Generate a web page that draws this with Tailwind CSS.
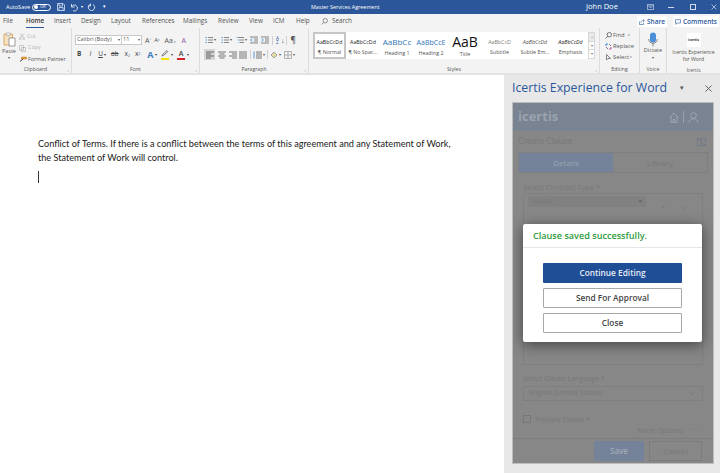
<!DOCTYPE html>
<html lang="en">
<head>
    <meta charset="UTF-8">
    <title>Master Services Agreement - Word</title>
    <script src="https://cdn.jsdelivr.net/npm/@tailwindcss/browser@4"></script>
</head>
<body class="w-[720px] h-[473px] overflow-hidden bg-white font-['Open_Sans',sans-serif] text-[#444]">

    <!-- Title bar -->
    <header class="h-[14px] bg-[#2b579a] text-white flex items-center relative">
        <div class="w-[311px] flex items-center text-[5.500px] shrink-0">
            <span class="ml-[6px] w-[20px] whitespace-nowrap">AutoSave</span>
            <span class="ml-[6px] w-[19px] h-[7px] rounded-full border border-white flex items-center pl-[1px] gap-[2px] text-[4px]"><i class="w-[4px] h-[4px] rounded-full bg-white"></i>Off</span>
            <svg class="ml-[6px] w-[8px] h-[8px]" viewBox="0 0 8 8" fill="none" stroke="#dce6f4" stroke-width=".8"><path d="M.5.5h5.500l1.500 1.500v5.500h-7zM2 .5v2.500h3.500v-2.500M2 7.500v-3h4v3"/></svg>
            <svg class="ml-[5px] w-[9px] h-[9px]" viewBox="0 0 9 9" fill="none" stroke="#dce6f4" stroke-width=".9"><path d="M1.500 1v3h3M1.700 3.800a3 3 0 1 1 1.500 4"/></svg>
            <span class="ml-[2px] text-[4px]">▾</span>
            <svg class="ml-[4px] w-[9px] h-[9px]" viewBox="0 0 9 9" fill="none" stroke="#dce6f4" stroke-width=".9"><path d="M3 1.500a3.200 3.200 0 1 0 3 0M3.500 .5v2.500h-2.500"/></svg>
            <span class="ml-[7px] text-[5px]">▾</span>
        </div>
        <span class="w-[68px] text-center whitespace-nowrap text-[5.400px] shrink-0">Master Services Agreement</span>
        <span class="ml-[207px] w-[31px] text-[7.500px] whitespace-nowrap shrink-0">John Doe</span>
        <svg class="ml-[30px] w-[7px] h-[6px] shrink-0" viewBox="0 0 7 6" fill="none" stroke="#cfdcee" stroke-width=".7"><path d="M.4.4h6.200v5.200h-6.200zM.4 2h6.200M2.500 4l1-1 1 1"/></svg>
        <span class="ml-[14px] w-[6px] h-[1px] bg-[#cfdcee] shrink-0"></span>
        <span class="ml-[16px] w-[6px] h-[6px] border border-[#cfdcee] shrink-0"></span>
        <svg class="ml-[15px] w-[6px] h-[6px] shrink-0" viewBox="0 0 6 6" stroke="#cfdcee" stroke-width=".7"><path d="M.5.5l5 5M5.500.5l-5 5"/></svg>
    </header>

    <!-- Tabs -->
    <nav class="h-[14px] bg-[#f3f3f3] flex items-center text-[6.300px] text-[#555] relative whitespace-nowrap">
        <span class="ml-[3px] w-[23px]">File</span>
        <span class="w-[18px] mr-[10px] font-semibold text-[#333] border-b-[1.500px] border-[#2b579a] leading-[11px] h-[13px]">Home</span>
        <span class="w-[27px]">Insert</span>
        <span class="w-[30px]">Design</span>
        <span class="w-[31px]">Layout</span>
        <span class="w-[41px]">References</span>
        <span class="w-[35px]">Mailings</span>
        <span class="w-[31px]">Review</span>
        <span class="w-[24px]">View</span>
        <span class="w-[23px]">ICM</span>
        <span class="w-[25px]">Help</span>
        <svg class="w-[7px] h-[7px]" viewBox="0 0 7 7" fill="none" stroke="#666" stroke-width=".7"><circle cx="4.300" cy="2.700" r="2.200"/><path d="M2.700 4.300L.5 6.500"/></svg>
        <span class="ml-[4px]">Search</span>
        <span class="absolute left-[637px] top-[2px] w-[30px] h-[11px] bg-white text-[#2b579a] font-semibold flex items-center justify-center gap-[2px] text-[6.500px]">
            <svg class="w-[6px] h-[6px]" viewBox="0 0 6 6" fill="none" stroke="#2b579a" stroke-width=".6"><path d="M.5 2.500v3h4v-2M2 3.500c0-1.500 1-2 2.500-2M4 .5l1.500 1-1.500 1"/></svg>Share</span>
        <span class="absolute left-[673px] top-[2px] w-[46px] h-[11px] bg-white text-[#2b579a] font-semibold flex items-center justify-center gap-[2px] text-[6.500px]">
            <svg class="w-[6px] h-[6px]" viewBox="0 0 6 6" fill="none" stroke="#2b579a" stroke-width=".6"><path d="M.5.700h5v3.300h-3.500l-1 1.300v-1.300h-.5z"/></svg>Comments</span>
    </nav>

    <!-- Ribbon -->
    <section class="h-[45px] bg-[#f3f3f3] flex text-[5.400px] text-[#555] leading-none">

        <div class="w-[72px] border-r border-[#dcdcdc] flex flex-col">
            <div class="flex-1 flex pl-[2px] pt-[4px]">
                <div class="w-[14px] flex flex-col items-center">
                    <svg class="w-[13px] h-[15px]" viewBox="0 0 13 15" fill="none"><path d="M1 2h8.500v11h-8.500z" fill="#f6e2c0" stroke="#d99a45" stroke-width=".8"/><path d="M3.500 1h3.500v2.500h-3.500z" fill="#fff" stroke="#999" stroke-width=".6"/><path d="M6 6h6v8h-6z" fill="#fff" stroke="#777" stroke-width=".7"/></svg>
                    <span class="mt-[2px]">Paste</span>
                    <span class="mt-[2px] text-[4px]">▾</span>
                </div>
                <div class="ml-[3px] flex flex-col gap-[4.500px] pt-[1px] whitespace-nowrap">
                    <span class="flex items-center gap-[2px] text-[#b5b5b5]"><svg class="w-[6px] h-[7px]" viewBox="0 0 6 7" fill="none" stroke="#aaa" stroke-width=".6"><path d="M1 .5l3.500 4M5 .5l-3.500 4"/><circle cx="1.200" cy="5.500" r="1"/><circle cx="4.800" cy="5.500" r="1"/></svg>Cut</span>
                    <span class="flex items-center gap-[2px] text-[#b5b5b5]"><svg class="w-[7px] h-[7px]" viewBox="0 0 7 7" fill="none" stroke="#aaa" stroke-width=".6"><path d="M.5.500h4v4.500h-4zM2.500 2.500h4v4h-4z"/></svg>Copy</span>
                    <span class="flex items-center gap-[1px]"><svg class="w-[8px] h-[7px]" viewBox="0 0 8 7" fill="none" stroke-width="1"><path d="M2.500 1h5v2h-5z" fill="#e59b3a" stroke="#c77a20" stroke-width=".5"/><path d="M1 5.500l3-2.500" stroke="#444"/></svg>Format Painter</span>
                </div>
            </div>
            <span class="text-center h-[6px] text-[5.200px] flex items-center justify-center relative">Clipboard<span class="absolute right-[2px] text-[4px] text-[#888]">⌟</span></span>
        </div>

        <div class="w-[128px] border-r border-[#dcdcdc] flex flex-col">
            <div class="flex-1 px-[3px] pt-[7px]">
                <div class="flex items-center h-[10px]">
                    <span class="w-[47px] h-[10px] bg-white border border-[#c8c8c8] flex items-center justify-between px-[1px] text-[5.600px]">Calibri (Body)<i class="not-italic text-[4px]">▾</i></span>
                    <span class="w-[20px] h-[10px] bg-white border border-l-0 border-[#c8c8c8] flex items-center justify-between px-[1px] text-[5.600px]">11<i class="not-italic text-[4px]">▾</i></span>
                    <span class="ml-[3px] text-[7px]">A<sup class="text-[3px] text-[#2b579a]">^</sup></span>
                    <span class="ml-[3px] text-[6px]">A<sup class="text-[3px] text-[#2b579a]">v</sup></span>
                    <span class="ml-[5px] text-[7px] whitespace-nowrap">Aa<i class="not-italic text-[3px]"> ▾</i></span>
                    <span class="ml-[6px] text-[7px] text-[#8a5aa8]">A</span>
                </div>
                <div class="flex items-center mt-[4px] h-[11px] text-[6.500px] text-[#444]">
                    <b class="ml-[2px]">B</b>
                    <i class="ml-[8px]">I</i>
                    <u class="ml-[7px]">U</u><span class="ml-[1px] text-[4px]">▾</span>
                    <s class="ml-[5px]">ab</s>
                    <span class="ml-[6px]">x<sub class="text-[3.500px] text-[#2b579a]">2</sub></span>
                    <span class="ml-[5px]">x<sup class="text-[3.500px] text-[#2b579a]">2</sup></span>
                    <span class="ml-[7px] text-[9px] font-bold text-[#3f7fc4]">A</span><span class="ml-[1px] text-[4px]">▾</span>
                    <span class="ml-[4px] w-[9px] h-[10px] flex flex-col items-center"><svg class="w-[8px] h-[7px]" viewBox="0 0 8 7" fill="none" stroke="#666" stroke-width=".8"><path d="M1 6l1-2 4-3.500 1 1-4 3.500z"/></svg><i class="w-[8px] h-[2px] bg-[#f4e300] mt-[1px]"></i></span><span class="ml-[1px] text-[4px]">▾</span>
                    <span class="ml-[4px] w-[9px] h-[10px] flex flex-col items-center font-semibold leading-[7px] text-[7px]">A<i class="w-[8px] h-[2px] bg-[#d8222a] mt-[1px]"></i></span><span class="ml-[1px] text-[4px]">▾</span>
                </div>
            </div>
            <span class="text-center h-[6px] text-[5.200px] flex items-center justify-center relative">Font<span class="absolute right-[2px] text-[4px] text-[#888]">⌟</span></span>
        </div>

        <div class="w-[109px] border-r border-[#dcdcdc] flex flex-col">
            <div class="flex-1 pl-[4px] pt-[7px]">
                <div class="flex items-center h-[10px] whitespace-nowrap">
                    <svg class="ml-[1px] w-[8px] h-[8px]" viewBox="0 0 8 8" stroke="#555" stroke-width=".7"><path d="M3 1.500h5M3 4h5M3 6.500h5"/><path d="M.5 1.500h1.500M.5 4h1.500M.5 6.500h1.500" stroke="#2b7cd3"/></svg><span class="ml-[1px] text-[4px]">▾</span>
                    <svg class="ml-[5px] w-[8px] h-[8px]" viewBox="0 0 8 8" stroke="#555" stroke-width=".7"><path d="M3 1.500h5M3 4h5M3 6.500h5"/><path d="M.5 1.500h1.500M.5 4h1.500M.5 6.500h1.500" stroke="#2b7cd3"/></svg><span class="ml-[1px] text-[4px]">▾</span>
                    <svg class="ml-[4px] w-[8px] h-[8px]" viewBox="0 0 8 8" stroke="#555" stroke-width=".7"><path d="M2 1.500h6M3 4h5M4 6.500h4"/><path d="M.5 1.500h1M1.500 4h1M2.500 6.500h1" stroke="#2b7cd3"/></svg><span class="ml-[1px] text-[4px]">▾</span>
                    <svg class="ml-[3px] w-[8px] h-[8px]" viewBox="0 0 8 8" fill="none" stroke="#555" stroke-width=".7"><path d="M0 1h8M4 3h4M4 5h4M0 7h8"/><path d="M2.500 2.500l-2 1.500 2 1.500" stroke="#2b7cd3"/></svg>
                    <svg class="ml-[3px] w-[8px] h-[8px]" viewBox="0 0 8 8" fill="none" stroke="#555" stroke-width=".7"><path d="M0 1h8M4 3h4M4 5h4M0 7h8"/><path d="M.5 2.500l2 1.500-2 1.500" stroke="#2b7cd3"/></svg>
                    <span class="ml-[3px] w-[1px] h-[9px] bg-[#d0d0d0]"></span>
                    <span class="ml-[3px] text-[4.500px] leading-[4px] w-[4px] whitespace-normal text-[#2b579a]">A Z</span><span class="ml-[1px] text-[7px]">↓</span>
                    <span class="ml-[1px] w-[1px] h-[9px] bg-[#d0d0d0]"></span>
                    <span class="ml-[4px] text-[8px] font-semibold">¶</span>
                </div>
                <div class="flex items-center mt-[4px] h-[11px]">
                    <span class="w-[11px] h-[11px] bg-[#d5d5d5] flex items-center justify-center"><svg class="w-[8px] h-[8px]" viewBox="0 0 8 8" stroke="#444" stroke-width=".8"><path d="M0 1h8M0 3h5M0 5h8M0 7h5"/></svg></span>
                    <svg class="ml-[3px] w-[8px] h-[8px]" viewBox="0 0 8 8" stroke="#555" stroke-width=".8"><path d="M0 1h8M1.500 3h5M0 5h8M1.500 7h5"/></svg>
                    <svg class="ml-[3px] w-[8px] h-[8px]" viewBox="0 0 8 8" stroke="#555" stroke-width=".8"><path d="M0 1h8M3 3h5M0 5h8M3 7h5"/></svg>
                    <svg class="ml-[2px] w-[8px] h-[8px]" viewBox="0 0 8 8" stroke="#555" stroke-width=".8"><path d="M0 1h8M0 3h8M0 5h8M0 7h8"/></svg>
                    <span class="ml-[3px] w-[1px] h-[9px] bg-[#d0d0d0]"></span>
                    <svg class="ml-[2px] w-[9px] h-[8px]" viewBox="0 0 9 8" stroke="#555" stroke-width=".8"><path d="M3 1h6M3 3h6M3 5h6M3 7h6"/><path d="M1 .5v7" stroke="#2b7cd3"/></svg><span class="ml-[1px] text-[4px]">▾</span>
                    <span class="ml-[2px] w-[1px] h-[9px] bg-[#d0d0d0]"></span>
                    <svg class="ml-[2px] w-[8px] h-[8px]" viewBox="0 0 8 8" fill="#e6d9a8" stroke="#777" stroke-width=".6"><path d="M1 4l3-3 3 3-3 3z"/></svg><span class="ml-[1px] text-[4px]">▾</span>
                    <svg class="ml-[3px] w-[8px] h-[8px]" viewBox="0 0 8 8" fill="none" stroke="#888" stroke-width=".6"><path d="M.5.500h7v7h-7zM4 .5v7M.5 4h7"/></svg><span class="ml-[1px] text-[4px]">▾</span>
                </div>
            </div>
            <span class="text-center h-[6px] text-[5.200px] flex items-center justify-center relative">Paragraph<span class="absolute right-[2px] text-[4px] text-[#888]">⌟</span></span>
        </div>

        <div class="w-[291px] border-r border-[#dcdcdc] flex flex-col">
            <div class="flex-1 flex pl-[4px] pt-[4px]">
                <div class="w-[275px] h-[27px] bg-white flex text-center text-[5.300px]">
                    <div class="w-[33px] h-full border-2 border-[#c6c6c6] flex flex-col items-center pt-[6px] gap-[5px]"><span class="text-[#222] whitespace-nowrap">AaBbCcDd</span><span>¶ Normal</span></div>
                    <div class="w-[34px] flex flex-col items-center pt-[8px] gap-[5px]"><span class="text-[#222] whitespace-nowrap">AaBbCcDd</span><span class="whitespace-nowrap">¶ No Spac...</span></div>
                    <div class="w-[34px] overflow-hidden flex flex-col items-center pt-[6px] gap-[4px]"><span class="text-[#2e74b5] text-[8px] h-[9px] whitespace-nowrap">AaBbCc</span><span>Heading 1</span></div>
                    <div class="w-[34px] overflow-hidden flex flex-col items-center pt-[7px] gap-[5px]"><span class="text-[#2e74b5] text-[7px] h-[7px] whitespace-nowrap">AaBbCcE</span><span>Heading 2</span></div>
                    <div class="w-[34px] overflow-hidden flex flex-col items-center pt-[3px] gap-[3px]"><span class="text-[#111] text-[14px] h-[14px]">AaB</span><span>Title</span></div>
                    <div class="w-[35px] flex flex-col items-center pt-[8px] gap-[5px]"><span class="text-[#777] whitespace-nowrap">AaBbCcD</span><span>Subtitle</span></div>
                    <div class="w-[36px] flex flex-col items-center pt-[8px] gap-[5px]"><span class="italic whitespace-nowrap">AaBbCcDd</span><span class="whitespace-nowrap">Subtle Em...</span></div>
                    <div class="w-[35px] flex flex-col items-center pt-[8px] gap-[5px]"><span class="italic text-[#222] whitespace-nowrap">AaBbCcDd</span><span>Emphasis</span></div>
                </div>
                <div class="w-[7px] h-[27px] flex flex-col text-[4px] text-[#777] border border-[#d6d6d6] bg-white">
                    <span class="flex-1 flex items-center justify-center bg-[#e9e9e9] text-[#bbb]">▴</span>
                    <span class="flex-1 flex items-center justify-center border-y border-[#d6d6d6]">▾</span>
                    <span class="flex-1 flex items-center justify-center">▾</span>
                </div>
            </div>
            <span class="text-center h-[6px] text-[5.200px] flex items-center justify-center relative">Styles<span class="absolute right-[2px] text-[4px] text-[#888]">⌟</span></span>
        </div>

        <div class="w-[40px] border-r border-[#dcdcdc] flex flex-col">
            <div class="flex-1 flex flex-col gap-[4px] pl-[5px] pt-[4px] text-[5.800px] whitespace-nowrap">
                <span class="flex items-center gap-[1px]"><svg class="w-[7px] h-[7px]" viewBox="0 0 7 7" fill="none" stroke="#555" stroke-width=".8"><circle cx="4.300" cy="2.700" r="2.200"/><path d="M2.700 4.300L.5 6.500"/></svg>Find <i class="not-italic text-[3px] ml-[2px]">▾</i></span>
                <span class="flex items-center gap-[1px]"><svg class="w-[7px] h-[7px]" viewBox="0 0 7 7" fill="none" stroke-width=".9"><path d="M1 3V1h2" stroke="#2b7cd3"/><path d="M6 4v2h-2" stroke="#b0469a"/><path d="M4 1l2 2M1 4l2 2" stroke="#666"/></svg>Replace</span>
                <span class="flex items-center gap-[1px]"><svg class="w-[7px] h-[7px]" viewBox="0 0 7 7" fill="none" stroke="#555" stroke-width=".7"><path d="M1.500.5v5.500l1.500-1.500h2.500z"/></svg>Select <i class="not-italic text-[3px]">▾</i></span>
            </div>
            <span class="text-center h-[6px] text-[5.200px] flex items-center justify-center">Editing</span>
        </div>

        <div class="w-[27px] border-r border-[#dcdcdc] flex flex-col items-center">
            <svg class="w-[10px] h-[15px] mt-[4px]" viewBox="0 0 10 15" fill="none"><rect x="2" y=".5" width="6" height="10" rx="3" fill="#4a90d9"/><path d="M.7 7a4.300 4.300 0 0 0 8.600 0M5 11.500v3" stroke="#666" stroke-width=".8"/></svg>
            <span class="mt-[1px] text-[5.600px]">Dictate</span>
            <span class="mt-[2px] text-[4px]">▾</span>
            <span class="mt-auto h-[6px] text-[5.200px] flex items-center">Voice</span>
        </div>

        <div class="w-[53px] flex flex-col items-center">
            <span class="mt-[5px] w-[14px] h-[14px] bg-white flex items-center justify-center text-[3.500px] font-bold text-[#333]">icertis</span>
            <span class="mt-[2px] text-[5.200px] leading-[7px] text-center whitespace-nowrap">Icertis Experience<br>for Word</span>
            <span class="mt-auto h-[6px] text-[5px] flex items-center">Icertis</span>
        </div>
    </section>

    <div class="h-[2px] bg-[#e3e3e3]"></div>

    <div class="flex h-[398px]">
        <!-- Document -->
        <main class="w-[504px] bg-white pl-[38px] pt-[62px] font-['Lato',sans-serif] text-[9.150px] leading-[13.500px] text-[#1a1a1a]">
            <p class="w-[425px]">Conflict of Terms. If there is a conflict between the terms of this agreement and any Statement of Work, the Statement of Work will control.</p>
            <div class="w-[1px] h-[12px] bg-[#333] mt-[7px]"></div>
        </main>

        <!-- Task pane -->
        <aside class="w-[216px] bg-[#e8e8e8] flex flex-col">
            <div class="h-[27px] pl-[8px] flex items-center text-[#2b579a] text-[12.300px] whitespace-nowrap shrink-0">
                <span class="w-[168px]">Icertis Experience for Word</span>
                <span class="text-[7px] text-[#555]">▾</span>
                <svg class="ml-[21px] w-[7px] h-[7px]" viewBox="0 0 7 7" stroke="#555" stroke-width=".9"><path d="M.5.5l6 6M6.500.5l-6 6"/></svg>
            </div>

            <div class="relative w-[202px] h-[362px] ml-[8px] bg-[#878787] border border-[#bdbdbd] text-[#787878] text-[7.500px] flex flex-col overflow-hidden">
                <div class="h-[28px] bg-[#798392] flex items-center px-[5px] shrink-0">
                    <span class="text-[13px] font-bold text-[#9aa3ae]">icertis</span>
                    <svg class="ml-auto w-[10px] h-[11px]" viewBox="0 0 10 11" fill="none" stroke="#a7aeb8" stroke-width=".8"><path d="M.7 5.500l4.300-4.500 4.300 4.500M2 4.500v6h2.200v-3h1.600v3h2.200v-6"/></svg>
                    <span class="mx-[4px] w-[1px] h-[12px] bg-[#98a0ac]"></span>
                    <svg class="mr-[9px] w-[11px] h-[11px]" viewBox="0 0 11 11" fill="none" stroke="#a7aeb8" stroke-width=".8"><circle cx="5.500" cy="3.500" r="2.800"/><path d="M.8 11c.5-3 2.500-4.300 4.700-4.300s4.200 1.300 4.700 4.300"/></svg>
                </div>
                <div class="h-[21px] flex items-center justify-between px-[5px] text-[8.500px] shrink-0">
                    Create Clause
                    <svg class="mr-[2px] w-[9px] h-[8px]" viewBox="0 0 9 8" fill="none" stroke="#69758a" stroke-width=".7"><path d="M.4.400h8.200v7.200h-8.200zM.4.400l8.200 7.200M4.500.4v7.200"/></svg>
                </div>
                <div class="mx-[5px] h-[21px] flex shrink-0 border border-[#7f7f7f] text-[8px]">
                    <span class="w-[94px] bg-[#74839a] text-[#9ba5b3] flex items-center justify-center">Details</span>
                    <span class="flex-1 flex items-center justify-center">Library</span>
                </div>
                <span class="ml-[10px] mt-[9px] h-[10px] leading-[10px] shrink-0">Select Contract Type *</span>
                <div class="mx-[10px] mt-[1px] h-[172px] border border-[#7f7f7f] relative shrink-0">
                    <span class="absolute left-[4px] top-[2px] w-[118px] h-[11px] bg-[#818181] pl-[3px] text-[5.500px] flex items-center justify-between pr-[4px]">MSA_SD_<b class="text-[#555] text-[6px]">×</b></span>
                    <span class="absolute left-[137px] top-[8px] text-[8px] leading-[10px]">×</span>
                    <svg class="absolute left-[156px] top-[11px] w-[7px] h-[5px]" viewBox="0 0 7 5" fill="none" stroke="#777" stroke-width=".7"><path d="M.5.500l3 3.500 3-3.500"/></svg>
                </div>
                <span class="ml-[10px] mt-[9px] h-[10px] leading-[10px] text-[7px] shrink-0">Select Clause Language *</span>
                <div class="mx-[10px] mt-[2px] h-[15px] border border-[#7f7f7f] flex items-center justify-between pl-[5px] pr-[6px] shrink-0 text-[7px]">
                    English (United States)
                    <svg class="w-[7px] h-[5px]" viewBox="0 0 7 5" fill="none" stroke="#777" stroke-width=".7"><path d="M.5.500l3 3.500 3-3.500"/></svg>
                </div>
                <div class="ml-[10px] mt-[13px] h-[9px] flex items-start gap-[4px] overflow-hidden shrink-0 text-[7px] leading-[12px]">
                    <span class="w-[8px] h-[8px] border border-[#777] shrink-0 mt-[1px]"></span>Primary Clause *
                </div>
                <div class="border-b border-[#7c7c7c] h-[16px] flex items-center justify-end pr-[11px] gap-[8px] shrink-0 text-[7.200px] whitespace-nowrap">
                    More Options<span class="tracking-[1.500px] font-bold text-[7px]">···</span>
                </div>
                <div class="flex-1 flex justify-end items-start gap-[5px] pt-[2px] pr-[11px] text-[8px]">
                    <span class="w-[50px] h-[20px] bg-[#74839a] text-[#a0a9b5] flex items-center justify-center font-semibold">Save</span>
                    <span class="w-[53px] h-[20px] border border-[#7c7c7c] flex items-center justify-center">Cancel</span>
                </div>

                <!-- Modal -->
                <div class="absolute left-[10px] top-[121px] w-[179px] h-[118px] bg-white rounded-[2px] shadow-[0_3px_14px_rgba(0,0,0,0.5)] flex flex-col text-[8.300px] text-[#444]">
                    <div class="h-[24px] pl-[10px] flex items-center border-b border-[#e5e5e5] text-[#2e9a3c] font-semibold text-[9.100px] shrink-0">Clause saved successfully.</div>
                    <div class="flex flex-col items-center gap-[5px] pt-[15px]">
                        <button class="w-[139px] h-[20px] rounded-[1px] bg-[#1f4e96] text-[#e6ecf5] font-semibold">Continue Editing</button>
                        <button class="w-[139px] h-[20px] rounded-[1px] border border-[#a8a8a8] font-semibold">Send For Approval</button>
                        <button class="w-[139px] h-[20px] rounded-[1px] border border-[#a8a8a8] font-semibold">Close</button>
                    </div>
                </div>
            </div>
        </aside>
    </div>
</body>
</html>
